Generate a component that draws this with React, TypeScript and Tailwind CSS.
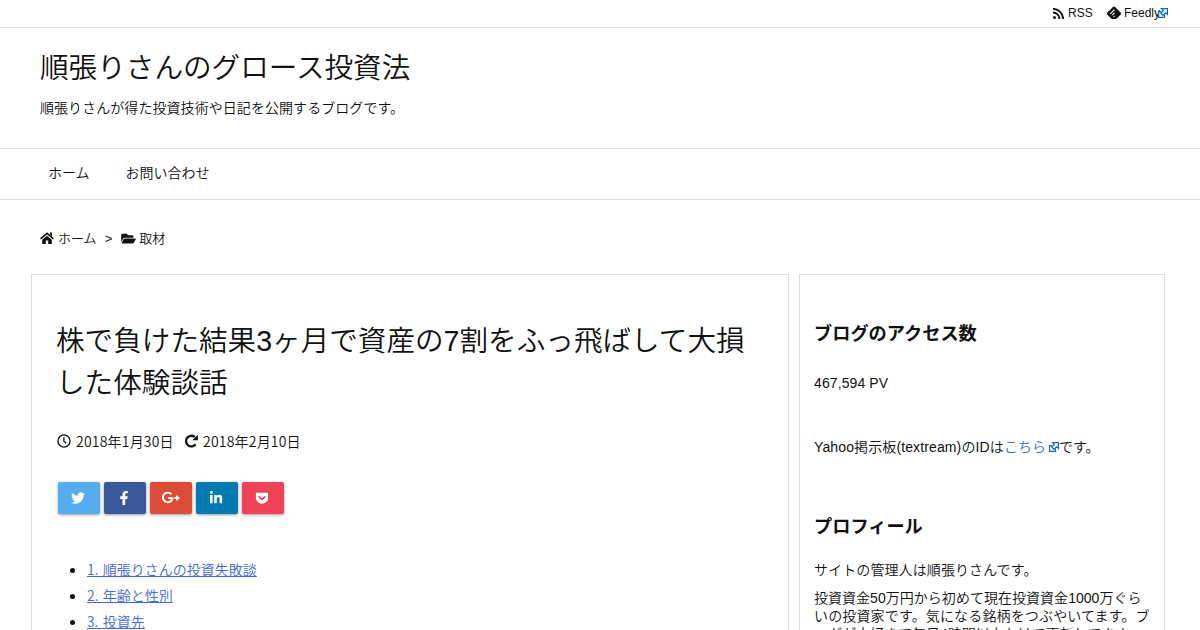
import React from "react";
import {
  FaFacebookF,
  FaFolderOpen,
  FaGetPocket,
  FaLinkedinIn,
  FaTwitter,
} from "react-icons/fa";

type IconProps = { className?: string };

const navItems = ["ホーム", "お問い合わせ"];

const contents = ["1. 順張りさんの投資失敗談", "2. 年齢と性別", "3. 投資先"];

const shareButtons = [
  { id: "twitter", color: "bg-[#55acee]", icon: <FaTwitter /> },
  { id: "facebook", color: "bg-[#3b5998]", icon: <FaFacebookF /> },
  { id: "google", color: "bg-[#dd4b39]", icon: <GooglePlusIcon /> },
  { id: "linkedin", color: "bg-[#0479b4]", icon: <FaLinkedinIn /> },
  { id: "pocket", color: "bg-[#ee4257]", icon: <FaGetPocket /> },
];

function RssIcon({ className }: IconProps) {
  return (
    <svg viewBox="0 0 11 11" className={className} fill="none" stroke="currentColor" strokeWidth="1.9">
      <circle cx="1.5" cy="9.5" r="1.5" fill="currentColor" stroke="none" />
      <path d="M0 4.5a6.4 6.4 0 0 1 6.4 6.5M0 .9A10 10 0 0 1 10.1 11" />
    </svg>
  );
}

function FeedlyIcon({ className }: IconProps) {
  return (
    <svg viewBox="0 0 24 24" className={className} fill="currentColor">
      <path d="M13.9 1.8a2.7 2.7 0 0 0-3.8 0L.8 11.2a2.7 2.7 0 0 0 0 3.8l6.6 6.7c.5.4 1.1.7 1.8.7h5.6c.7 0 1.4-.3 1.9-.8l6.5-6.6a2.7 2.7 0 0 0 0-3.8L13.9 1.8z" />
      <path
        d="M12 5.5l1.5 1.5-6.8 6.8-2.3-.2zM12 11l1.5 1.5-3.5 3.4-2.2-.2zM12 16.3l1.5 1.5-1.1 1.2-2-.2z"
        fill="#fff"
      />
    </svg>
  );
}

function HomeIcon({ className }: IconProps) {
  return (
    <svg viewBox="0 0 14 12" className={className} fill="currentColor">
      <path d="M7 3.7 2.2 7.7V12h3.6V8.6h2.4V12h3.6V7.7z" />
      <path d="M.5 6.9 7 1.4l6.5 5.5" fill="none" stroke="currentColor" strokeWidth="1.6" />
      <path d="M10 .5h2v4l-2-1.7z" />
    </svg>
  );
}

function ClockIcon({ className }: IconProps) {
  return (
    <svg viewBox="0 0 14 14" className={className} fill="none" stroke="currentColor" strokeWidth="1.3">
      <circle cx="7" cy="7" r="6.1" />
      <path d="M6.9 3.3v4l2.2 1.9" />
    </svg>
  );
}

function RepeatIcon({ className }: IconProps) {
  return (
    <svg viewBox="0 0 14 14" className={className}>
      <path d="M11.6 10.2A5.3 5.3 0 1 1 10.7 3" fill="none" stroke="currentColor" strokeWidth="2.3" />
      <path d="M13.9.7v5.6H8.3z" fill="currentColor" />
    </svg>
  );
}

function GooglePlusIcon() {
  return (
    <svg viewBox="0 0 18 12" className="ml-0.5 h-3 w-[18px]" fill="none" stroke="currentColor" strokeWidth="1.9">
      <path d="M9.4 2.3A4.8 4.8 0 1 0 10.5 6.1H6" />
      <path d="M12.6 6h4.8M15 3.6v4.8" strokeWidth="1.8" />
    </svg>
  );
}

function ExternalIcon({ className }: IconProps) {
  return (
    <svg viewBox="0 0 10 10" className={className} fill="#fff" stroke="#0a6ad6" strokeWidth="1.25">
      <path d="M3 3.5H.6v5.9h5.9V7" />
      <path d="M3.5.6h5.9v5.9L7.6 4.9 5 7.4 2.700 5l2.600-2.600z" />
    </svg>
  );
}

function TopBar() {
  return (
    <div className="flex h-7 justify-end border-b border-[#ddd] pr-8 pb-px text-xs leading-[26px]">
      <span className="flex items-center">
        <RssIcon className="mr-1 h-[11px] w-[11px]" />
        <span className="w-[25px]">RSS</span>
      </span>
      <span className="ml-3.5 flex items-center">
        <FeedlyIcon className="mr-[3px] h-3.5 w-3.5" />
        <span className="w-[34px]">Feedly</span>
        <ExternalIcon className="h-2.5 w-2.5" />
      </span>
    </div>
  );
}

function Article() {
  return (
    <main className="h-[500px] w-[758px] border border-[#ddd] px-[25px] pt-[45px]">
      <h1 className="-ml-px text-[28.6px] leading-[42px] whitespace-nowrap">
        株で負けた結果3ヶ月で資産の7割をふっ飛ばして大損
        <br />
        した体験談話
      </h1>
      <div className="mt-[27px] flex h-5 items-center font-['Noto_Sans_CJK_JP',sans-serif] text-sm leading-5">
        <ClockIcon className="mr-[5px] h-3.5 w-3.5" />
        <span className="w-[98px] pb-px tracking-[0.2px]">2018年1月30日</span>
        <RepeatIcon className="mr-[5px] ml-2.5 h-3.5 w-3.5" />
        <span className="pb-px tracking-[0.2px]">2018年2月10日</span>
      </div>
      <div className="mt-[31px] ml-px flex gap-1">
        {shareButtons.map((button) => (
          <div
            key={button.id}
            className={`flex h-8 w-[42px] items-center justify-center rounded-[2px] pr-0.5 text-sm text-white shadow-[0_1px_3px_rgba(0,0,0,0.4)] ${button.color}`}
          >
            {button.icon}
          </div>
        ))}
      </div>
      <ul className="mt-[42px] list-disc pl-[30px] font-['Noto_Sans_CJK_JP',sans-serif] text-sm leading-[26px]">
        {contents.map((item) => (
          <li key={item}>
            <a href="#" className="text-[#4169e1] underline [word-spacing:1.2px]">
              {item}
            </a>
          </li>
        ))}
      </ul>
    </main>
  );
}

function Sidebar() {
  return (
    <aside className="h-[500px] w-[366px] border border-[#ddd] px-3.5 pt-[46px] text-sm">
      <h3 className="text-[18.2px] leading-[27px] font-bold">ブログのアクセス数</h3>
      <p className="mt-[26px] leading-[18px] tracking-[0.1px]">467,594 PV</p>
      <p className="mt-[46px] flex items-center leading-[18px]">
        <span className="w-[190px] tracking-[0.12px] whitespace-nowrap">Yahoo掲示板(textream)のIDは</span>
        <a href="#" className="flex items-center text-[#4169e1]">
          こちら
          <ExternalIcon className="ml-[3px] h-2.5 w-2.5" />
        </a>
        です。
      </p>
      <h3 className="mt-[58px] text-[18.2px] leading-[27px] font-bold">プロフィール</h3>
      <p className="mt-5 leading-[18px] tracking-[0.1px]">サイトの管理人は順張りさんです。</p>
      <div className="mt-2.5 leading-[18px] whitespace-nowrap">
        <p className="tracking-[0.03px]">投資資金50万円から初めて現在投資資金1000万ぐら</p>
        <p className="tracking-[0.15px]">いの投資家です。気になる銘柄をつぶやいてます。ブ</p>
        <p>ログが大好きで毎日4時間以上かけて更新してます。</p>
      </div>
    </aside>
  );
}

export default function App() {
  return (
    <div className="h-[630px] overflow-hidden bg-white font-['Liberation_Sans','Noto_Sans_CJK_JP',sans-serif] font-[350] text-[#111]">
      <TopBar />
      <header className="h-[120px] px-10 pt-[19px]">
        <div className="text-[28.6px] leading-[42px]">順張りさんのグロース投資法</div>
        <p className="mt-[9px] text-sm leading-[21px] tracking-[0.06px]">順張りさんが得た投資技術や日記を公開するブログです。</p>
      </header>
      <nav className="flex h-[52px] items-center gap-9 border-y border-[#ddd] px-12 pb-0.5 text-sm">
        {navItems.map((item) => (
          <a key={item} href="#">
            {item}
          </a>
        ))}
      </nav>
      <div className="mt-[29px] flex h-5 items-center px-10 text-[13px] leading-5">
        <HomeIcon className="mr-1 mb-0.5 h-3 w-3.5" />
        ホーム
        <span className="mr-[9px] ml-2">&gt;</span>
        <FaFolderOpen className="mr-[3px] mb-0.5 h-[13px] w-[15px]" />
        取材
      </div>
      <div className="mt-[25px] ml-[31px] flex gap-2.5">
        <Article />
        <Sidebar />
      </div>
    </div>
  );
}
